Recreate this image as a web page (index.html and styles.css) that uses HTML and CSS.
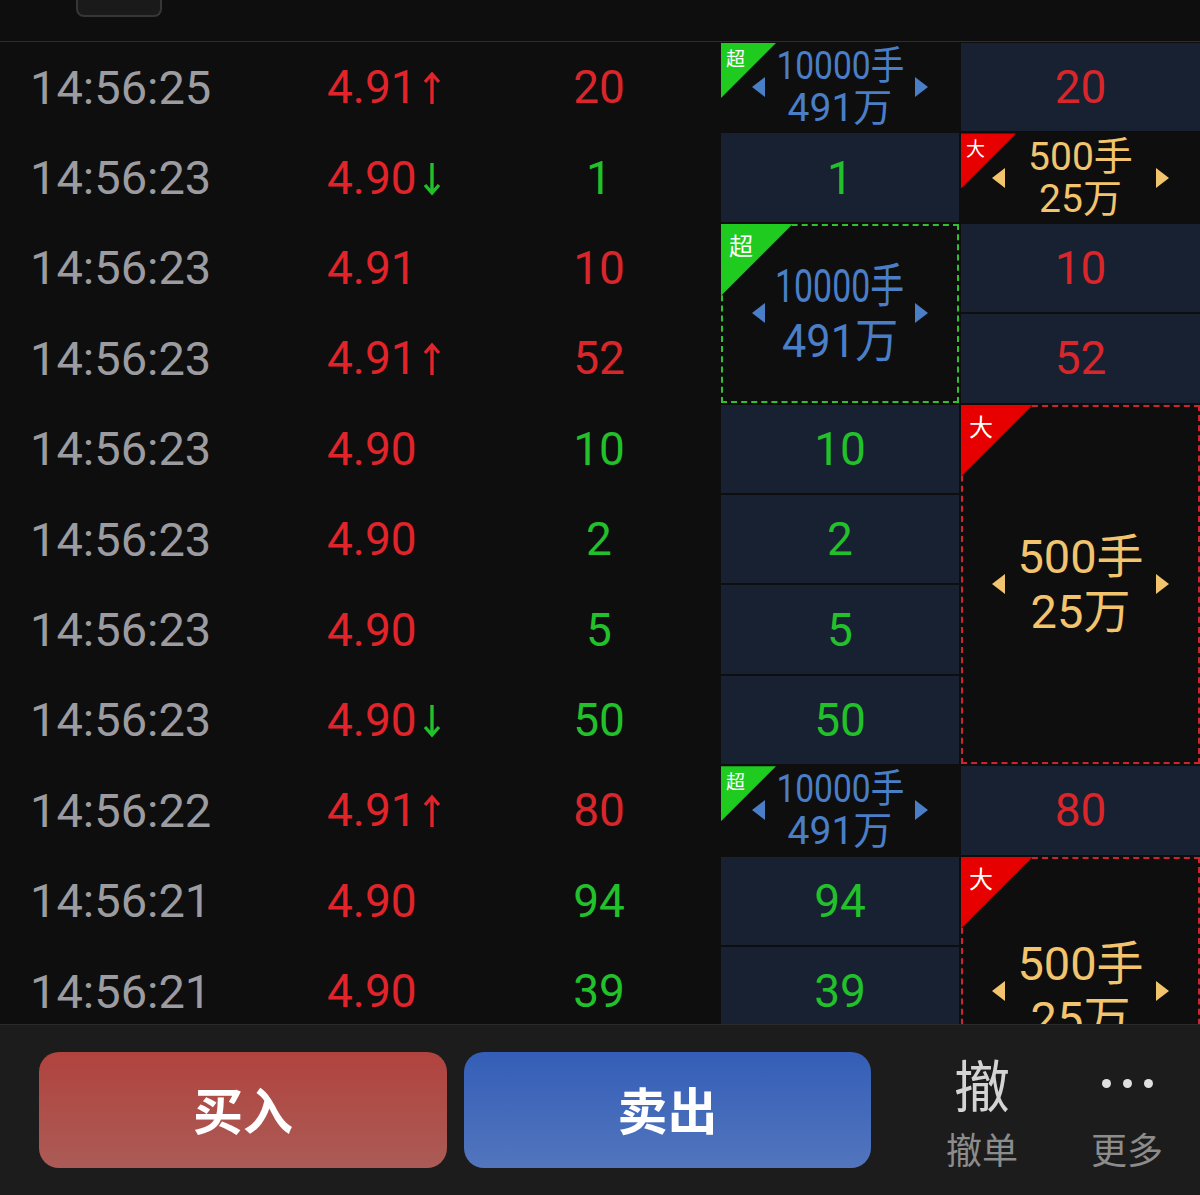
FILE: index.html
```html
<!DOCTYPE html>
<html lang="zh-CN">
<head>
  <meta charset="UTF-8" />
  <meta name="viewport" content="width=device-width, initial-scale=1.0" />
  <title>分时成交</title>
  <link rel="stylesheet" href="styles.css">
</head>
<body>
  <div class="top-bar">
    <div class="top-tab"></div>
  </div>

  <!-- 逐笔成交 -->
  <div class="tape">
    <div class="grid">
      <!-- row 1 -->
      <div class="time">14:56:25</div>
      <div class="price">4.91<span class="arrow up"></span></div>
      <div class="vol red">20</div>
      <div class="cell-a big-order super">
        <span class="flag">超</span>
        <span class="tri left"></span>
        <div class="amount"><span class="squeeze">10000手</span><br>491万</div>
        <span class="tri right"></span>
      </div>
      <div class="cell-b box red">20</div>

      <!-- row 2 -->
      <div class="time">14:56:23</div>
      <div class="price">4.90<span class="arrow down"></span></div>
      <div class="vol green">1</div>
      <div class="cell-a box green">1</div>
      <div class="cell-b big-order large">
        <span class="flag">大</span>
        <span class="tri left"></span>
        <div class="amount">500手<br>25万</div>
        <span class="tri right"></span>
      </div>

      <!-- row 3 -->
      <div class="time">14:56:23</div>
      <div class="price">4.91</div>
      <div class="vol red">10</div>
      <div class="cell-a big-order super wide span-2">
        <span class="flag">超</span>
        <span class="tri left"></span>
        <div class="amount"><span class="squeeze">10000手</span><br><span class="squeeze2">491万</span></div>
        <span class="tri right"></span>
      </div>
      <div class="cell-b box red">10</div>

      <!-- row 4 -->
      <div class="time">14:56:23</div>
      <div class="price">4.91<span class="arrow up"></span></div>
      <div class="vol red">52</div>
      <div class="cell-b box red">52</div>

      <!-- row 5 -->
      <div class="time">14:56:23</div>
      <div class="price">4.90</div>
      <div class="vol green">10</div>
      <div class="cell-a box green">10</div>
      <div class="cell-b big-order large wide span-4">
        <span class="flag">大</span>
        <span class="tri left"></span>
        <div class="amount">500手<br>25万</div>
        <span class="tri right"></span>
      </div>

      <!-- row 6 -->
      <div class="time">14:56:23</div>
      <div class="price">4.90</div>
      <div class="vol green">2</div>
      <div class="cell-a box green">2</div>

      <!-- row 7 -->
      <div class="time">14:56:23</div>
      <div class="price">4.90</div>
      <div class="vol green">5</div>
      <div class="cell-a box green">5</div>

      <!-- row 8 -->
      <div class="time">14:56:23</div>
      <div class="price">4.90<span class="arrow down"></span></div>
      <div class="vol green">50</div>
      <div class="cell-a box green">50</div>

      <!-- row 9 -->
      <div class="time">14:56:22</div>
      <div class="price">4.91<span class="arrow up"></span></div>
      <div class="vol red">80</div>
      <div class="cell-a big-order super">
        <span class="flag">超</span>
        <span class="tri left"></span>
        <div class="amount"><span class="squeeze">10000手</span><br>491万</div>
        <span class="tri right"></span>
      </div>
      <div class="cell-b box red">80</div>

      <!-- row 10 -->
      <div class="time">14:56:21</div>
      <div class="price">4.90</div>
      <div class="vol green">94</div>
      <div class="cell-a box green">94</div>
      <div class="cell-b big-order large wide span-3">
        <span class="flag">大</span>
        <span class="tri left"></span>
        <div class="amount">500手<br>25万</div>
        <span class="tri right"></span>
      </div>

      <!-- row 11 -->
      <div class="time">14:56:21</div>
      <div class="price">4.90</div>
      <div class="vol green">39</div>
      <div class="cell-a box green">39</div>
    </div>
  </div>

  <!-- 底部操作栏 -->
  <div class="bottom-bar">
    <button class="btn buy">买入</button>
    <button class="btn sell">卖出</button>
    <div class="action first">
      <div class="action-icon">撤</div>
      <div class="action-label">撤单</div>
    </div>
    <div class="action">
      <div class="action-icon dots"><i></i><i></i><i></i></div>
      <div class="action-label">更多</div>
    </div>
  </div>
</body>
</html>
```

FILE: styles.css
```css
body {
  margin: 0;
  height: 1195px;
  overflow: hidden;
  background: #0e0e0f;
  font-family: Roboto, "Noto Sans CJK SC", sans-serif;
  display: flex;
  flex-direction: column;
}
.top-bar {
  height: 41px;
  border-bottom: 1px solid #2e2e2e;
  flex: none;
}
.top-tab {
  margin-left: 76px;
  width: 82px;
  height: 15px;
  background: #1a1a1a;
  border: 2px solid #363636;
  border-top: none;
  border-radius: 0 0 8px 8px;
}
.tape {
  height: 982px;
  overflow: hidden;
  flex: none;
}
.grid {
  display: grid;
  grid-template-columns: 300px 180px 241px 238px 241px;
  grid-auto-rows: 88.4px;
  row-gap: 2px;
  padding-top: 1px;
}
.grid > div {
  display: flex;
  align-items: center;
}
.time {
  grid-column: 1;
  padding-left: 30px;
  color: #9c9ca0;
  font-size: 47px;
}
.price {
  grid-column: 2;
  padding-left: 27px;
  color: #e0242a;
  font-size: 46px;
}
.vol {
  grid-column: 3;
  justify-content: center;
  padding-right: 3px;
  font-size: 46px;
}
.cell-a {
  grid-column: 4;
}
.cell-b {
  grid-column: 5;
  margin-left: 2px;
}
.red {
  color: #d8262b;
}
.green {
  color: #22c02a;
}
.box {
  justify-content: center;
  background: #172131;
  font-size: 46px;
}
.arrow {
  width: 18px;
  height: 34px;
  margin-left: 6px;
  margin-top: 2px;
  background-repeat: no-repeat;
}
.arrow.up {
  background-image: url("data:image/svg+xml,%3Csvg xmlns='http://www.w3.org/2000/svg' width='18' height='34'%3E%3Cpath d='M9 33V3M2 11L9 3L16 11' stroke='%23e0242a' stroke-width='3.4' fill='none'/%3E%3C/svg%3E");
}
.arrow.down {
  background-image: url("data:image/svg+xml,%3Csvg xmlns='http://www.w3.org/2000/svg' width='18' height='34'%3E%3Cpath d='M9 1V31M2 23L9 31L16 23' stroke='%2322c02a' stroke-width='3.4' fill='none'/%3E%3C/svg%3E");
}

/* 大单 / 超大单 */
.big-order {
  position: relative;
  justify-content: center;
  box-sizing: border-box;
}
.span-2 { grid-row: span 2; }
.span-3 { grid-row: span 3; }
.span-4 { grid-row: span 4; }
.super { color: #4a7ec6; }
.large { color: #f2c46e; }
.super.wide { border: 2px dashed #30c030; }
.large.wide { border: 2px dashed #cc2430; }
.flag {
  position: absolute;
  left: 0;
  top: 0;
  width: 55px;
  height: 55px;
  clip-path: polygon(0 0, 100% 0, 0 100%);
  color: #fff;
  font-family: "Noto Sans CJK SC", sans-serif;
  font-size: 19px;
  line-height: 19px;
  box-sizing: border-box;
  padding: 5px 0 0 5px;
}
.super .flag { background: #1ecb1e; }
.large .flag { background: #e60000; }
.wide .flag {
  left: -2px;
  top: -2px;
  width: 72px;
  height: 72px;
  font-size: 24px;
  line-height: 24px;
  padding: 9px 0 0 8px;
}
.amount {
  text-align: center;
  font-size: 39px;
  line-height: 42px;
}
.wide .amount {
  font-size: 47px;
  line-height: 55px;
}
.squeeze {
  display: inline-block;
  transform: scaleX(0.86);
}
.wide .squeeze {
  transform: scaleX(0.72);
}
.squeeze2 {
  display: inline-block;
  transform: scaleX(0.92);
}
.tri {
  position: absolute;
  top: 50%;
  margin-top: -10px;
  border-top: 10px solid transparent;
  border-bottom: 10px solid transparent;
}
.tri.left {
  left: 31px;
  border-right: 13px solid currentColor;
}
.tri.right {
  right: 31px;
  border-left: 13px solid currentColor;
}
.wide .tri.left { left: 29px; }
.wide .tri.right { right: 29px; }

/* 底部栏 */
.bottom-bar {
  flex: 1;
  display: flex;
  align-items: flex-start;
  background: #1c1c1c;
  border-top: 1px solid #2a2a2a;
  padding: 27px 0 0 39px;
  font-family: "Noto Sans CJK SC", sans-serif;
}
.btn {
  height: 116px;
  border: none;
  border-radius: 20px;
  color: #fff;
  font-family: "Noto Sans CJK SC", sans-serif;
  font-size: 50px;
  line-height: 1;
  padding: 0 0 4px;
  font-weight: 700;
}
.buy {
  width: 408px;
  margin-right: 17px;
  background: linear-gradient(#b1433e, #ab5b56);
}
.sell {
  width: 407px;
  background: linear-gradient(#345eb7, #5275bd);
}
.action {
  width: 110px;
  margin-left: 35px;
  display: flex;
  flex-direction: column;
  align-items: center;
}
.action.first {
  margin-left: 56px;
}
.action-icon {
  height: 62px;
  color: #d4d4d4;
  font-size: 56px;
  line-height: 62px;
}
.dots {
  display: flex;
  align-items: center;
  gap: 12px;
}
.dots i {
  width: 9px;
  height: 9px;
  border-radius: 50%;
  background: #e0e0e0;
}
.action-label {
  margin-top: 14px;
  color: #8c8c8c;
  font-size: 36px;
  line-height: 40px;
}
```
